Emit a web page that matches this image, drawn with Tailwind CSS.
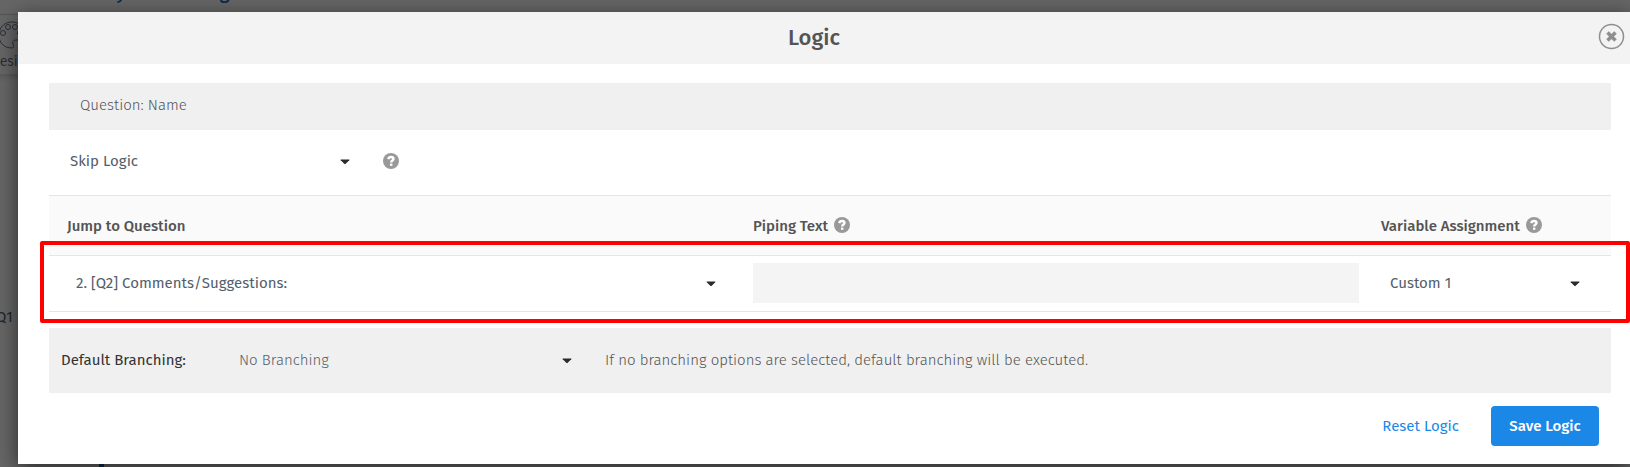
<!DOCTYPE html>
<html lang="en">
<head>
  <meta charset="UTF-8" />
  <meta name="viewport" content="width=device-width, initial-scale=1.0"/>
  <title>Logic</title>
  <script src="https://cdn.jsdelivr.net/npm/@tailwindcss/browser@4"></script>
</head>
<body class="h-screen overflow-hidden bg-[#666666] font-['Fira_Sans','Noto_Sans',sans-serif] text-[15px] leading-5 text-[#545e6b]">
  <svg class="hidden">
    <symbol id="help" viewBox="0 0 16 16">
      <circle cx="8" cy="8" r="8" fill="#999999"/>
      <path d="M5.2 6.1C5.6 4.600 6.600 4 8 4c1.500 0 2.500.8 2.500 2 0 1.600-2.300 1.500-2.300 3.500" fill="none" stroke="#fff" stroke-width="2.400"/>
      <rect x="7" y="10.600" width="2.400" height="2.200" fill="#fff"/>
    </symbol>
    <symbol id="caret" viewBox="0 0 10 6">
      <path d="M1 .5h8q.8 0 .3.700L5.700 4.800q-.7.700-1.400 0L.7 1.200Q.2.500 1 .5z" fill="#2b2b2b"/>
    </symbol>
  </svg>

  <!-- page behind the dialog -->
  <div class="absolute inset-0 overflow-hidden text-[#20262c]">
    <div class="absolute -top-[17px] left-[70px] text-lg leading-5 font-medium text-[#0b2a4d]">Survey Customizing</div>
    <div class="absolute top-[14px] -left-5 w-16 h-[60px] border-t border-[#555555] shadow-md text-center">
      <svg class="mx-auto mt-[6px]" width="28" height="28" viewBox="0 0 28 28" fill="none" stroke="#2b3036" stroke-width="1">
        <path d="M14 1C6 1 1 7 1 14c0 8 5 13 13 13 2 0 2-2 1-4-1-3 1-4 4-4 5 0 8-1 8-6C27 6 21 1 14 1z"/>
        <circle cx="10" cy="6" r="2.500"/><circle cx="17" cy="6" r="2.500"/><circle cx="5" cy="12" r="2.500"/><circle cx="22" cy="12" r="2.500"/>
      </svg>
      <span class="block pt-[3px] text-sm text-[#2b3036]">Design</span>
    </div>
    <div class="absolute top-[307px] -left-1">Q1</div>
    <div class="absolute bottom-0 left-[99px] w-[5px] h-1 bg-[#0b2a4d]"></div>
  </div>

  <div class="relative mt-3 ml-[18px] bg-white shadow-[0_5px_20px_rgba(0,0,0,0.6)]">
    <header class="flex items-center h-[52px] bg-[#f3f3f3] pr-[5px]">
      <h1 class="flex-1 pl-3 text-center text-[22px] leading-7 font-medium text-[#545454]">Logic</h1>
      <button aria-label="Close" class="-mt-1">
        <svg width="27" height="27" viewBox="0 0 27 27" fill="none" stroke="#8f8f8f">
          <circle cx="13.500" cy="13.500" r="12" stroke-width="1.500"/>
          <path d="M9.500 9.500l8 8M17.500 9.500l-8 8" stroke-width="3.600"/>
        </svg>
      </button>
    </header>

    <main class="pt-[19px] pl-[31px] pr-[19px]">
      <div class="flex items-center h-[47px] px-[31px] pb-1 bg-[#f0f0f0] text-[#545454] font-light">Question: Name</div>

      <div class="flex items-center h-[65px] pl-[21px] pb-1">
        <div class="grid w-[288px] items-center">
          <select aria-label="Logic type" class="col-start-1 row-start-1 appearance-none bg-transparent outline-none">
            <option>Skip Logic</option>
          </select>
          <svg class="col-start-1 row-start-1 justify-self-end mr-2 mt-[2px] pointer-events-none" width="10" height="6"><use href="#caret"/></svg>
        </div>
        <svg class="ml-[25px]" width="16" height="16"><use href="#help"/></svg>
      </div>

      <table class="w-full table-fixed border-y border-[#e5e5e5]">
        <thead class="bg-[#fafafa] text-left text-[#545454]">
          <tr class="h-[60px] border-b border-[#e5e5e5]">
            <th class="pl-[18px] font-medium">Jump to Question</th>
            <th class="w-[38.8%] font-medium"><span class="flex items-center gap-[6px]">Piping Text <svg class="mb-[2px]" width="16" height="16"><use href="#help"/></svg></span></th>
            <th class="w-[252px] pl-[22px] font-medium"><span class="flex items-center gap-[6px]">Variable Assignment <svg class="mb-[2px]" width="16" height="16"><use href="#help"/></svg></span></th>
          </tr>
        </thead>
        <tbody>
          <tr class="h-[56px]">
            <td class="pl-[27px] pr-[37px] pb-[2px]">
              <div class="grid items-center">
                <select aria-label="Jump to question" class="col-start-1 row-start-1 appearance-none bg-transparent outline-none">
                  <option>2. [Q2] Comments/Suggestions:</option>
                </select>
                <svg class="col-start-1 row-start-1 justify-self-end mt-[2px] pointer-events-none" width="10" height="6"><use href="#caret"/></svg>
              </div>
            </td>
            <td class="align-top pt-[7px]"><input type="text" aria-label="Piping text" class="block w-full h-10 px-2 bg-[#f4f4f4] outline-none"></td>
            <td class="px-[31px] pb-[2px]">
              <div class="grid items-center">
                <select aria-label="Variable assignment" class="col-start-1 row-start-1 appearance-none bg-transparent outline-none">
                  <option>Custom 1</option>
                </select>
                <svg class="col-start-1 row-start-1 justify-self-end mt-[2px] pointer-events-none" width="10" height="6"><use href="#caret"/></svg>
              </div>
            </td>
          </tr>
        </tbody>
      </table>

      <div class="flex items-center h-[65px] mt-4 pl-3 pb-[2px] bg-[#f0f0f0]">
        <label for="branching" class="w-[178px] text-[#333333]">Default Branching:</label>
        <div class="grid w-[333px] items-center">
          <select id="branching" class="col-start-1 row-start-1 appearance-none bg-transparent font-light outline-none">
            <option>No Branching</option>
          </select>
          <svg class="col-start-1 row-start-1 justify-self-end mt-[2px] pointer-events-none" width="10" height="6"><use href="#caret"/></svg>
        </div>
        <p class="ml-[33px] font-light text-[#545454]">If no branching options are selected, default branching will be executed.</p>
      </div>

      <div class="flex justify-end items-center gap-8 pt-[13px] pb-[18px] pr-3">
        <button class="text-[#1b87e6]">Reset Logic</button>
        <button class="w-[108px] h-10 rounded bg-[#1b87e6] font-medium text-white">Save Logic</button>
      </div>
    </main>

    <!-- highlight around the jump row -->
    <div class="absolute top-[229px] left-[22px] right-0 h-[82px] border-4 border-[#ff0000] rounded-xs pointer-events-none"></div>
  </div>
</body>
</html>
